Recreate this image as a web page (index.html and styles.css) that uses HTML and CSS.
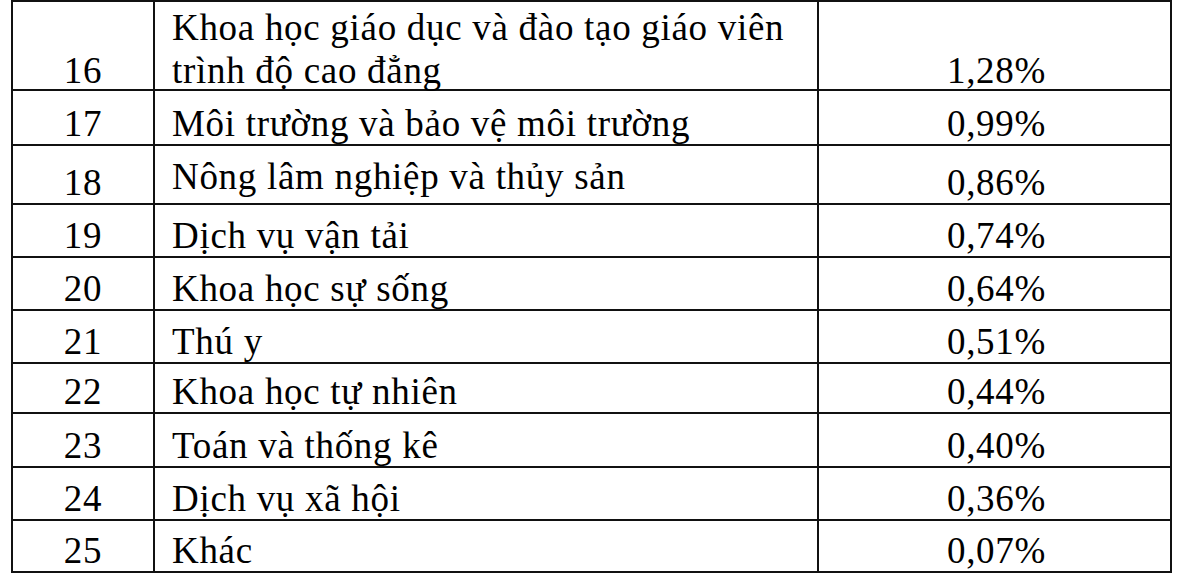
FILE: index.html
```html
<!DOCTYPE html>
<html lang="vi">
<head>
<meta charset="utf-8">
<title>Bảng tỷ lệ</title>
<link rel="stylesheet" href="styles.css">
</head>
<body>
<div class="table">
  <div class="row r16">
    <div class="cell num"><span class="txt">16</span></div>
    <div class="cell name"><span class="txt">Khoa học giáo dục và đào tạo giáo viên<br>trình độ cao đẳng</span></div>
    <div class="cell pct"><span class="txt">1,28%</span></div>
  </div>
  <div class="row r17">
    <div class="cell num"><span class="txt">17</span></div>
    <div class="cell name"><span class="txt">Môi trường và bảo vệ môi trường</span></div>
    <div class="cell pct"><span class="txt">0,99%</span></div>
  </div>
  <div class="row r18">
    <div class="cell num"><span class="txt">18</span></div>
    <div class="cell name raised"><span class="txt">Nông lâm nghiệp và thủy sản</span></div>
    <div class="cell pct"><span class="txt">0,86%</span></div>
  </div>
  <div class="row r19">
    <div class="cell num"><span class="txt">19</span></div>
    <div class="cell name"><span class="txt">Dịch vụ vận tải</span></div>
    <div class="cell pct"><span class="txt">0,74%</span></div>
  </div>
  <div class="row r20">
    <div class="cell num"><span class="txt">20</span></div>
    <div class="cell name"><span class="txt">Khoa học sự sống</span></div>
    <div class="cell pct"><span class="txt">0,64%</span></div>
  </div>
  <div class="row r21">
    <div class="cell num"><span class="txt">21</span></div>
    <div class="cell name"><span class="txt">Thú y</span></div>
    <div class="cell pct"><span class="txt">0,51%</span></div>
  </div>
  <div class="row r22">
    <div class="cell num"><span class="txt">22</span></div>
    <div class="cell name"><span class="txt">Khoa học tự nhiên</span></div>
    <div class="cell pct"><span class="txt">0,44%</span></div>
  </div>
  <div class="row r23">
    <div class="cell num"><span class="txt">23</span></div>
    <div class="cell name"><span class="txt">Toán và thống kê</span></div>
    <div class="cell pct"><span class="txt">0,40%</span></div>
  </div>
  <div class="row r24">
    <div class="cell num"><span class="txt">24</span></div>
    <div class="cell name"><span class="txt">Dịch vụ xã hội</span></div>
    <div class="cell pct"><span class="txt">0,36%</span></div>
  </div>
  <div class="row r25">
    <div class="cell num"><span class="txt">25</span></div>
    <div class="cell name"><span class="txt">Khác</span></div>
    <div class="cell pct"><span class="txt">0,07%</span></div>
  </div>
</div>
</body>
</html>
```

FILE: styles.css
```css
* {
  box-sizing: border-box;
}

html, body {
  margin: 0;
  padding: 0;
  background: #ffffff;
}

body {
  font-family: "Liberation Serif", Tinos, "Times New Roman", serif;
  font-size: 37px;
  letter-spacing: 0.7px;
  line-height: 41px;
  color: #000000;
}

.table {
  margin-left: 11px;
  width: 1161px;
  border-top: 2px solid #111111;
  border-left: 2px solid #111111;
}

.row {
  display: grid;
  grid-template-columns: 142px 664px 353px;
}

.cell {
  border-right: 2px solid #111111;
  border-bottom: 2px solid #111111;
  display: flex;
  align-items: flex-end;
  white-space: nowrap;
}

.num,
.pct {
  justify-content: center;
}

.pct {
  padding-left: 4px;
}

.name {
  padding-left: 17px;
}

.raised {
  padding-bottom: 6px;
}

.r16 { height: 89px; }
.r17 { height: 55px; }
.r18 { height: 59px; }
.r19 { height: 53px; }
.r20 { height: 53px; }
.r21 { height: 53px; }
.r22 { height: 50px; }
.r23 { height: 54px; }
.r24 { height: 53px; }
.r25 { height: 52px; }

.r16 .cell {
  line-height: 43px;
}

.r16 .txt {
  margin-bottom: -3px;
}
```
